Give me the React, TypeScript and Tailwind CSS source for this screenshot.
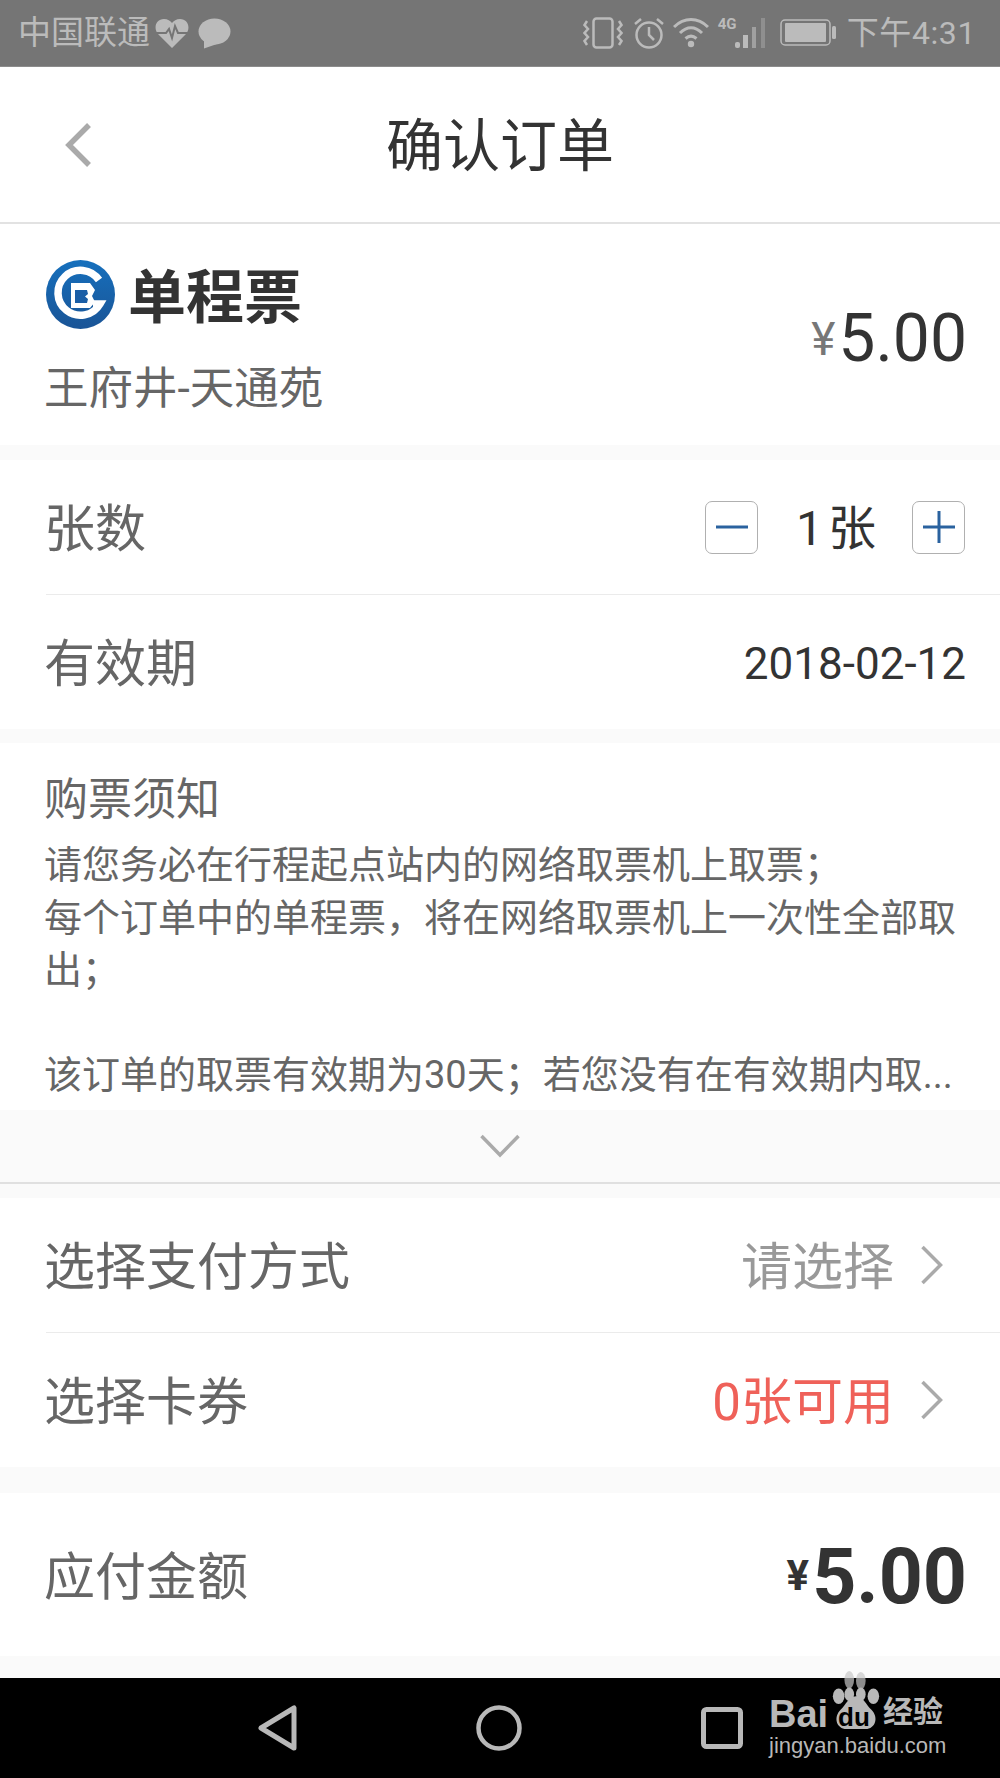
import React from 'react';

const CJK = "font-['Roboto','Noto_Sans_CJK_SC',sans-serif]";

const Chevron: React.FC = () => (
  <svg width="24" height="40" viewBox="0 0 24 40" fill="none" className="ml-[26px] mr-[23px]">
    <path d="M2.5 2 L20.5 20 L2.5 38" stroke="#aaaaaa" strokeWidth="3.5" />
  </svg>
);

const StepButton: React.FC<{ plus?: boolean }> = ({ plus }) => (
  <div className="flex h-[53px] w-[53px] items-center justify-center rounded-[7px] border-[1.5px] border-[#b0b0b0]">
    <svg width="34" height="34" viewBox="0 0 34 34" fill="none">
      <path d="M1 17 H33" stroke="#2a629f" strokeWidth="3" />
      {plus && <path d="M17 1 V33" stroke="#2a629f" strokeWidth="3" />}
    </svg>
  </div>
);

const Gap: React.FC<{ h: string }> = ({ h }) => <div className={`${h} bg-[#fafafa]`} />;

const StatusBar: React.FC = () => (
  <div className="flex h-[67px] items-center justify-between border-b border-[#8c8c8c] bg-[#757575] pl-[18px] pr-[24px] text-[#bbbbbb]">
    <div className="flex items-center">
      <span className="text-[33px] leading-[40px]">中国联通</span>
      <svg width="34" height="30" viewBox="0 0 34 30" className="ml-[5px]">
        <path d="M17 30 L3 16 C-2 10 1 1 9 1 C12.500 1 15.500 3 17 5 C18.500 3 21.500 1 25 1 C33 1 36 10 31 16 Z" fill="#bbbbbb" />
        <path d="M0 15 H11 L14 11 L17 20 L20 8 L23 15 H34" stroke="#757575" strokeWidth="2" fill="none" />
      </svg>
      <svg width="33" height="31" viewBox="0 0 33 31" className="ml-[9px]">
        <ellipse cx="16.500" cy="13.500" rx="16" ry="13" fill="#bbbbbb" />
        <path d="M6 22 L6 30.500 L19 26 Z" fill="#bbbbbb" />
      </svg>
    </div>
    <div className="flex items-center">
      <svg width="40" height="32" viewBox="0 0 40 32" fill="none" stroke="#bbbbbb">
        <rect x="10.500" y="1.500" width="19" height="29" rx="3" strokeWidth="2.500" />
        <path d="M4 4 L1.500 8 L5 12 L1.500 16 L5 20 L1.500 24 L4 28" strokeWidth="2.500" />
        <path d="M36 4 L38.500 8 L35 12 L38.500 16 L35 20 L38.500 24 L36 28" strokeWidth="2.500" />
      </svg>
      <svg width="32" height="32" viewBox="0 0 32 32" fill="none" stroke="#bbbbbb" strokeWidth="2.500" className="ml-[10px]">
        <circle cx="16" cy="18" r="12.500" />
        <path d="M16 10 V18 L21 23" />
        <path d="M2 7 L8 2 M30 7 L24 2" />
      </svg>
      <svg width="36" height="32" viewBox="0 0 36 32" fill="none" stroke="#bbbbbb" strokeWidth="3" className="ml-[8px]">
        <path d="M1 10 C11 0 25 0 35 10" />
        <path d="M7 16 C14 9 22 9 29 16" />
        <path d="M12.500 21.500 C16 18.500 20 18.500 23.500 21.500" />
        <circle cx="18" cy="27" r="3.200" fill="#bbbbbb" stroke="none" />
      </svg>
      <div className="relative ml-[9px] h-[32px] w-[49px]">
        <span className="absolute left-0 top-0 text-[15px] font-bold leading-[15px] font-['Roboto',sans-serif]">4G</span>
        <svg width="32" height="32" viewBox="0 0 32 32" className="absolute right-0 top-0">
          <rect x="0" y="25" width="5" height="6" rx="2" fill="#bbbbbb" />
          <rect x="8" y="18" width="5" height="13" fill="#bbbbbb" />
          <rect x="17" y="10" width="4" height="21" fill="#a0a0a0" />
          <rect x="26" y="1" width="4" height="30" fill="#8f8f8f" />
        </svg>
      </div>
      <svg width="57" height="28" viewBox="0 0 57 28" fill="none" className="ml-[13px]">
        <rect x="1" y="1" width="49" height="25" rx="4" stroke="#bbbbbb" strokeWidth="1.500" />
        <rect x="5" y="4" width="41" height="19" rx="1" fill="#bbbbbb" />
        <rect x="52" y="7" width="4" height="13" rx="1.500" fill="#bbbbbb" />
      </svg>
      <span className="ml-[10px] text-[32px] leading-[40px] tracking-[0.6px]">下午4:31</span>
    </div>
  </div>
);

const NavBar: React.FC = () => (
  <div className="relative flex h-[157px] items-center justify-center border-b-2 border-[#e2e2e2] bg-white">
    <svg width="30" height="46" viewBox="0 0 30 46" fill="none" className="absolute left-[63px] top-[55px]">
      <path d="M26 3 L6 23 L26 43" stroke="#aaaaaa" strokeWidth="5.500" />
    </svg>
    <span className="mt-[5px] text-[57px] leading-[70px] text-[#333333]">确认订单</span>
  </div>
);

const TicketCard: React.FC = () => (
  <div className="flex h-[221px] justify-between bg-white pl-[46px] pr-[33px]">
    <div className="flex flex-col pt-[35px]">
      <div className="flex items-center">
        <svg width="69" height="69" viewBox="0 0 69 69" fill="none">
          <defs>
            <linearGradient id="logoBlue" x1="0" y1="0" x2="0" y2="1">
              <stop offset="0" stopColor="#1670bd" />
              <stop offset="1" stopColor="#1a5496" />
            </linearGradient>
          </defs>
          <circle cx="34.500" cy="34.500" r="34.500" fill="url(#logoBlue)" />
          <path d="M53 20 A22.500 22.500 0 1 0 54 44 L47 44" stroke="white" strokeWidth="7.500" />
          <path d="M25 23 H44 L49 30 L46 36 L49 42 L44 48 H25 Z" fill="white" />
          <path d="M29 30 H41 L42 34 L39 36.500 L42 39 L41 43 H29 Z" fill="#1a5ea6" />
        </svg>
        <span className="ml-[13px] translate-y-[4px] text-[58px] font-bold leading-[70px] text-[#333333]">单程票</span>
      </div>
      <span className="-ml-[2px] mt-[32px] text-[44.500px] leading-[56px] text-[#666666]">王府井-天通苑</span>
    </div>
    <div className="flex items-baseline pt-[82px] text-[#333333]">
      <span className="mr-[3px] -translate-y-[6px] text-[46px] leading-none text-[#777777]">¥</span>
      <span className="text-[66px] leading-none">5.00</span>
    </div>
  </div>
);

const Row: React.FC<{ label: string; h: string; border?: boolean; children: React.ReactNode }> = ({ label, h, border, children }) => (
  <div className={`ml-[46px] flex ${h} items-center justify-between pr-[33px] ${border ? 'border-b-[1.5px] border-[#ebebeb]' : ''}`}>
    <span className="-ml-[2px] mt-[6px] text-[51px] leading-[64px] text-[#666666]">{label}</span>
    {children}
  </div>
);

const Notice: React.FC = () => (
  <div className="h-[367px] bg-white pl-[44px] pr-[34px] pt-[29px] text-[#666666]">
    <div className="text-[44px] leading-[56px]">购票须知</div>
    <div className="mt-[11px] text-[38px] leading-[52.500px]">
      <div>请您务必在行程起点站内的网络取票机上取票；</div>
      <div>每个订单中的单程票，将在网络取票机上一次性全部取出；</div>
      <div className="h-[52.500px]" />
      <div className="whitespace-nowrap">该订单的取票有效期为30天；若您没有在有效期内取...</div>
    </div>
  </div>
);

const NavKeys: React.FC = () => (
  <div className="relative flex h-[100px] items-center bg-black">
    <div className="flex w-full items-center pl-[258px]">
      <svg width="40" height="46" viewBox="0 0 40 46" fill="none">
        <path d="M36 3 V43 L3 23 Z" stroke="#b8b8b8" strokeWidth="5" strokeLinejoin="round" />
      </svg>
      <svg width="46" height="46" viewBox="0 0 46 46" fill="none" className="ml-[178px]">
        <circle cx="23" cy="23" r="20.500" stroke="#b8b8b8" strokeWidth="4.500" />
      </svg>
      <svg width="42" height="42" viewBox="0 0 42 42" fill="none" className="ml-[179px]">
        <rect x="2.500" y="2.500" width="37" height="37" rx="3" stroke="#b8b8b8" strokeWidth="5" />
      </svg>
    </div>
    <div className="absolute left-[769px] top-[1px] h-[88px] w-[180px] text-[#b8b8b8]">
      <span className="absolute left-0 top-[13px] font-['Liberation_Sans',sans-serif] text-[38px] font-bold leading-[44px]">Bai</span>
      <svg width="54" height="60" viewBox="0 0 56 62" className="absolute left-[60px] top-[-8px]">
        <ellipse cx="21" cy="9" rx="5" ry="9" fill="#c8c8c8" fillOpacity="0.7" />
        <ellipse cx="33" cy="10" rx="5" ry="9" fill="#c8c8c8" fillOpacity="0.7" />
        <ellipse cx="10" cy="26" rx="6" ry="8" fill="#b8b8b8" />
        <ellipse cx="46" cy="26" rx="6" ry="8" fill="#b8b8b8" />
        <ellipse cx="21" cy="24" rx="5" ry="7" fill="#b8b8b8" />
        <ellipse cx="33" cy="24" rx="5" ry="7" fill="#b8b8b8" />
        <path d="M28 26 C36 26 38 35 44 40 C52 48 48 60 38 60 H18 C8 60 4 48 12 40 C18 35 20 26 28 26 Z" fill="#b8b8b8" />
      </svg>
      <span className="absolute left-[69px] top-[24px] font-['Liberation_Sans',sans-serif] text-[26px] font-bold leading-[28px] text-black">du</span>
      <span className="absolute left-[114px] top-[14px] text-[30px] font-bold leading-[38px]">经验</span>
      <span className="absolute left-0 top-[53px] font-['Liberation_Sans',sans-serif] text-[22px] leading-[28px]">jingyan.baidu.com</span>
    </div>
  </div>
);

const App: React.FC = () => (
  <div className={`flex h-[1778px] w-[1000px] flex-col overflow-hidden bg-white ${CJK}`}>
    <StatusBar />
    <NavBar />
    <TicketCard />
    <Gap h="h-[15px]" />

    <Row label="张数" h="h-[135px]" border>
      <div className="mr-[2px] flex items-center">
        <StepButton />
        <span className="ml-[38px] mr-[36px] mt-[4px] text-[48px] leading-[60px] text-[#333333] [word-spacing:-7px]">1 张</span>
        <StepButton plus />
      </div>
    </Row>
    <Row label="有效期" h="h-[134px]">
      <span className="mr-[1px] mt-[4px] text-[44px] leading-[56px] text-[#333333]">2018-02-12</span>
    </Row>
    <Gap h="h-[14px]" />

    <Notice />
    <div className="flex h-[74px] items-center justify-center border-b-2 border-[#e0e0e0] bg-[#fafafa]">
      <svg width="40" height="24" viewBox="0 0 40 24" fill="none">
        <path d="M1.500 2 L20 21 L38.500 2" stroke="#aaaaaa" strokeWidth="3.500" />
      </svg>
    </div>
    <Gap h="h-[14px]" />

    <Row label="选择支付方式" h="h-[135px]" border>
      <div className="flex items-center">
        <span className="mt-[6px] text-[51px] leading-[64px] text-[#999999]">请选择</span>
        <Chevron />
      </div>
    </Row>
    <Row label="选择卡券" h="h-[134px]">
      <div className="flex items-center">
        <span className="mt-[6px] text-[51px] leading-[64px] text-[#ef6159]">0张可用</span>
        <Chevron />
      </div>
    </Row>
    <Gap h="h-[26px]" />

    <Row label="应付金额" h="h-[163px]">
      <div className="mt-[6px] flex items-baseline text-[#333333]">
        <span className="mr-[3px] -translate-y-[13px] text-[42px] font-bold leading-none">¥</span>
        <span className="text-[77px] font-bold leading-none">5.00</span>
      </div>
    </Row>
    <Gap h="h-[22px]" />

    <NavKeys />
  </div>
);

export default App;
